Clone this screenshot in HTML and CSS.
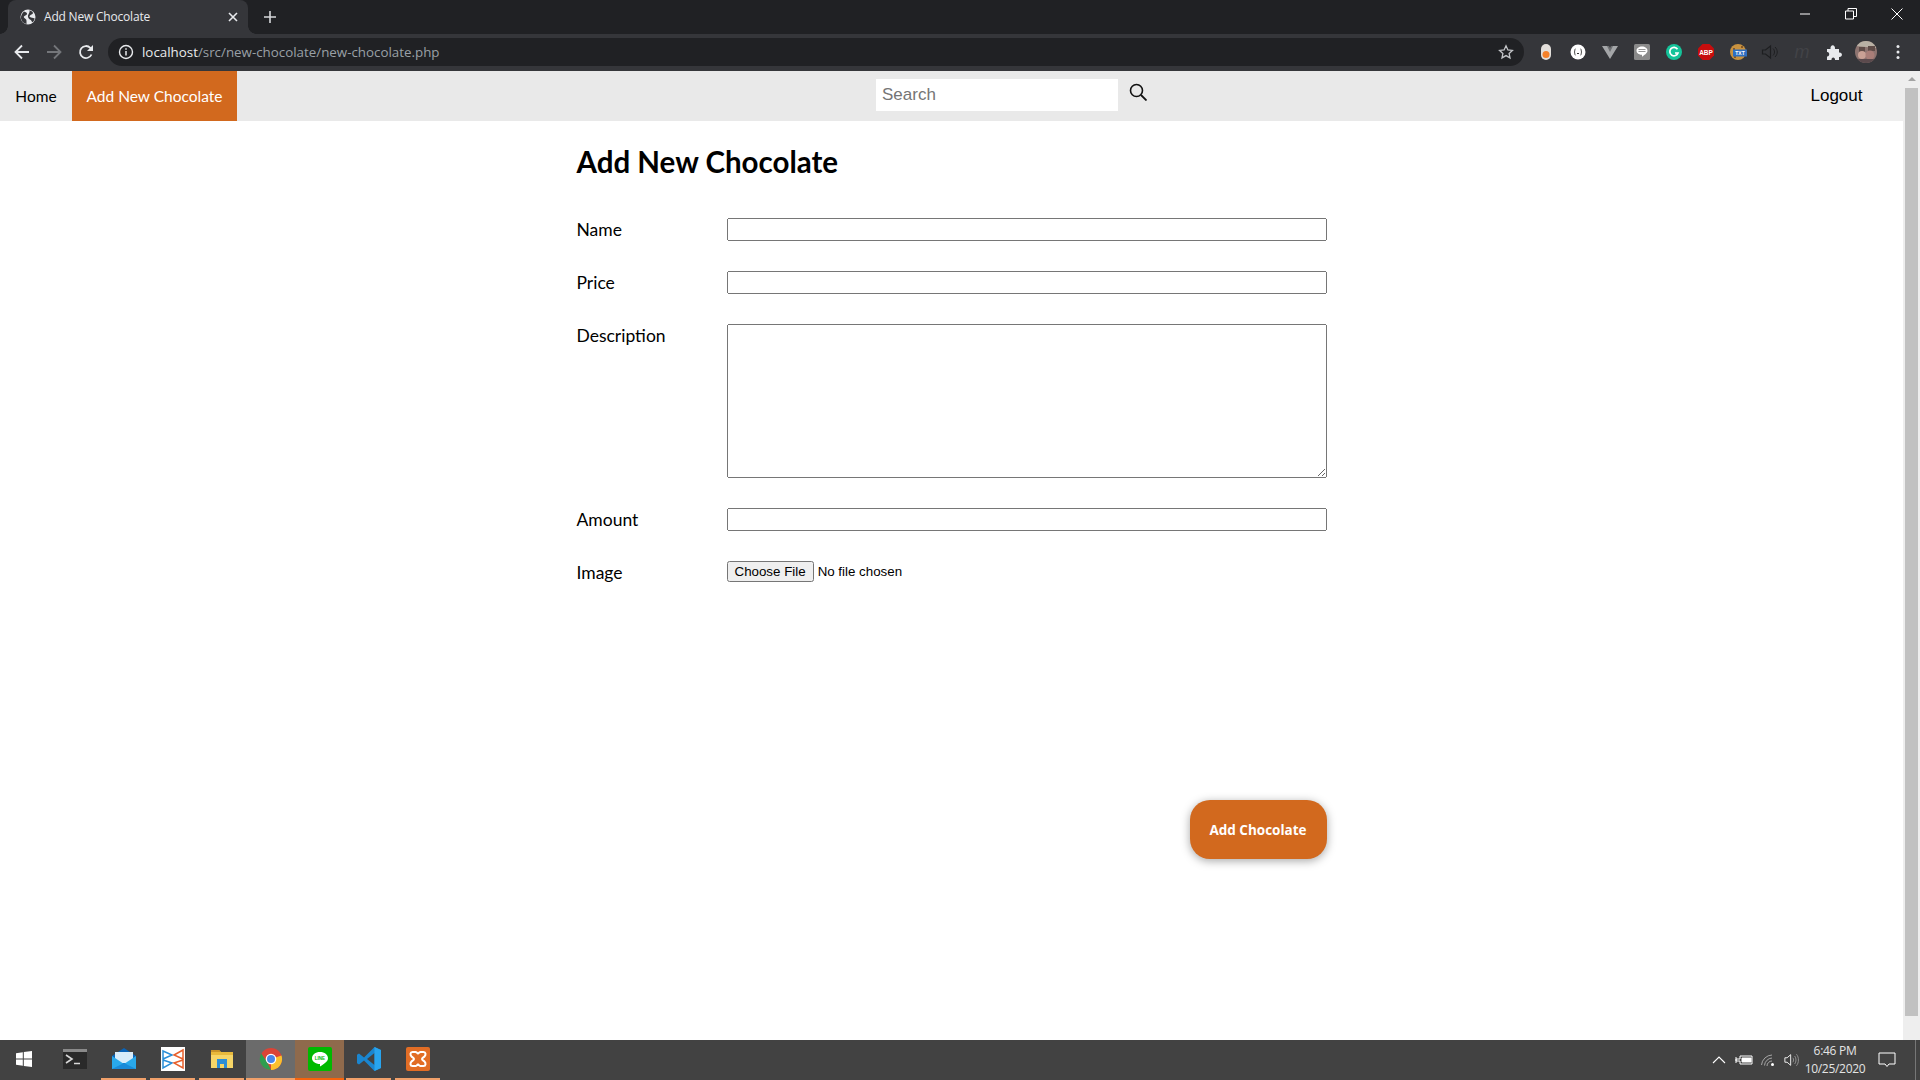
FILE: index.html
```html
<!DOCTYPE html>
<html lang="en">
  <head>
    <meta charset="UTF-8" />
    <title>Add New Chocolate</title>
    <link rel="stylesheet" href="styles.css">
  </head>

  <body>
    <div class="browser">
      <div class="tabstrip">
        <div class="tab">
          <svg class="favicon" viewBox="0 0 16 16"><circle cx="8" cy="8" r="7.500" fill="#e8eaed"/><path d="M4 2.500C5.500 3 6.500 3.500 7 4.500S5.500 6.500 4.500 7 3.500 8.500 5 9.500 6.500 11 6.500 12.500 6.500 14 6.500 15C3.500 14.500 1.500 12.500 1 9.500.7 7 2 4 4 2.500zM9.500 1.200c1.500.5 3 1.500 3.500 2.500S11 5.500 10 6.500 9.500 8 11 8.500 14 9 14.700 9.500C14.500 11 13.500 12.500 12 13.500 12 12 11 11 10 10.500S7.500 8 8 6.500 10 3 9.500 1.200z" fill="#35363a"/></svg>
          <span class="tab-title">Add New Chocolate</span>
          <svg class="tab-close" viewBox="0 0 10 10"><path d="M1 1l8 8M9 1l-8 8" stroke="#e8eaed" stroke-width="1.600"/></svg>
        </div>
        <svg class="new-tab" viewBox="0 0 12 12"><path d="M6 0v12M0 6h12" stroke="#d5d7da" stroke-width="1.600"/></svg>
        <div class="window-btns">
          <svg viewBox="0 0 12 12"><path d="M1 6h10" stroke="#fff"/></svg>
          <svg viewBox="0 0 12 12"><path d="M.5 3h8v8h-8zM3 3V.5h8.500v8H8.500" fill="none" stroke="#fff"/></svg>
          <svg viewBox="0 0 12 12"><path d="M.5.5l11 11M11.500.5l-11 11" stroke="#fff"/></svg>
        </div>
      </div>

      <div class="toolbar">
        <div class="nav-btn"><svg viewBox="0 0 16 16"><path d="M15 8H2M8 1.500L1.500 8 8 14.500" fill="none" stroke="#e8eaed" stroke-width="1.800"/></svg></div>
        <div class="nav-btn"><svg viewBox="0 0 16 16"><path d="M1 8h13M8 1.500L14.500 8 8 14.500" fill="none" stroke="#74767a" stroke-width="1.800"/></svg></div>
        <div class="nav-btn"><svg viewBox="0 0 16 16"><path d="M13.500 10.500A6 6 0 1 1 12.300 3.800L14 5.500" fill="none" stroke="#e8eaed" stroke-width="1.800"/><path d="M15 1v6H9z" fill="#e8eaed"/></svg></div>
        <div class="omnibox">
          <svg class="info" viewBox="0 0 16 16"><circle cx="8" cy="8" r="6.500" fill="none" stroke="#e8eaed" stroke-width="1.400"/><path d="M8 7v4.500M8 4.200v1.600" stroke="#e8eaed" stroke-width="1.500"/></svg>
          <span class="url"><b>localhost</b>/src/new-chocolate/new-chocolate.php</span>
          <svg class="star" viewBox="0 0 16 16"><path d="M8 1.800l1.900 4.100 4.500.5-3.300 3 .9 4.500L8 11.600l-4 2.300.9-4.500-3.300-3 4.500-.5z" fill="none" stroke="#c4c6c9" stroke-width="1.300"/></svg>
        </div>
        <div class="extensions">
          <svg viewBox="0 0 18 18"><rect x="4" y="1" width="10" height="16" rx="5" fill="#e3dfdb"/><circle cx="9" cy="11.500" r="3.500" fill="#f5812a"/></svg>
          <svg viewBox="0 0 18 18"><circle cx="9" cy="9" r="7.500" fill="#fff"/><path d="M6.500 6C5 6 6.500 9 5 9c1.500 0 0 3 1.500 3M11.500 6c1.500 0 0 3 1.500 3-1.500 0 0 3-1.500 3M8 10.500h2" fill="none" stroke="#333" stroke-width="1"/></svg>
          <svg viewBox="0 0 18 18"><path d="M1 3h6l2 4 2-4h6L9 16z" fill="#a4a6a8"/><path d="M6 3h2l1 2 1-2h2L9 9z" fill="#6d6f72"/></svg>
          <svg viewBox="0 0 18 18"><rect x="1" y="1" width="16" height="16" rx="1.500" fill="#8a8a8a"/><path d="M9 3.500c3 0 5.500 1.800 5.500 4.200 0 2.500-3.500 4.500-5.500 6v-2c-3 0-5.500-1.600-5.500-4 0-2.400 2.500-4.200 5.500-4.200z" fill="#fff"/><path d="M5.500 6.500h7M5.500 8.500h7" stroke="#999" stroke-width="1"/></svg>
          <svg viewBox="0 0 18 18"><circle cx="9" cy="9" r="8" fill="#15c39a"/><path d="M12.500 6.200A4.200 4.200 0 1 0 13 10H10" fill="none" stroke="#fff" stroke-width="1.700"/></svg>
          <svg viewBox="0 0 18 18"><path d="M5.500 1h7L17 5.500v7L12.500 17h-7L1 12.500v-7z" fill="#c70d0d"/><text x="9" y="11.700" class="abp-label">ABP</text></svg>
          <svg viewBox="0 0 18 18"><circle cx="9" cy="9" r="8" fill="#c9923f"/><circle cx="5" cy="6" r="1" fill="#6d4520"/><circle cx="6" cy="14" r="1" fill="#6d4520"/><circle cx="13" cy="4" r="1" fill="#6d4520"/><rect x="4" y="6.500" width="14" height="7" fill="#2f6fc0"/><text x="11" y="12.200" class="txt-label">TXT</text></svg>
          <svg viewBox="0 0 18 18"><path d="M1.500 7v4h3l5 4V3l-5 4z" fill="none" stroke="#1d1e20" stroke-width="1.200"/><path d="M12 5.500c2 2 2 5 0 7M14 4c3 3 3 7 0 10" fill="none" stroke="#1d1e20" stroke-width="1"/></svg>
          <span class="ext-m">m</span>
          <svg viewBox="0 0 18 18"><path d="M2 6h3.500c-.5-5 5-5 4.500 0H14v3.500c4-.5 4 5 0 4.500v3H10c.5-3.500-4-3.500-3.500 0H2v-3.500c3 .5 3-5 0-4.500z" fill="#e8eaed"/></svg>
          <svg class="avatar" viewBox="0 0 22 22"><defs><clipPath id="av"><circle cx="11" cy="11" r="11"/></clipPath></defs><g clip-path="url(#av)"><rect width="22" height="22" fill="#8d7470"/><path d="M0 0h22v7L0 5z" fill="#b9b1a5"/><path d="M4 6h6v6H4zM13 5h7v5h-7z" fill="#5f4c48"/><circle cx="7" cy="14" r="4" fill="#c9a195"/><circle cx="15" cy="14" r="4.500" fill="#a97e78"/><path d="M0 18h22v4H0z" fill="#5b4a4d"/></g></svg>
          <svg class="dots" viewBox="0 0 4 16"><circle cx="2" cy="2.500" r="1.500" fill="#e8eaed"/><circle cx="2" cy="8" r="1.500" fill="#e8eaed"/><circle cx="2" cy="13.500" r="1.500" fill="#e8eaed"/></svg>
        </div>
      </div>
    </div>

    <div class="viewport">
      <div class="page">
        <nav class="topnav">
          <a class="topnav-link" href="#">Home</a>
          <a class="topnav-link active" href="#">Add New Chocolate</a>
          <form class="search">
            <input class="search-input" type="text" placeholder="Search">
            <svg class="search-icon" viewBox="0 0 18 18"><circle cx="7.500" cy="7.500" r="6" fill="none" stroke="#111" stroke-width="1.600"/><path d="M12 12l5.500 5.500" stroke="#111" stroke-width="1.800"/></svg>
          </form>
          <a class="logout" href="#">Logout</a>
        </nav>

        <main class="container">
          <h1 class="title">Add New Chocolate</h1>
          <form class="chocolate-form">
            <label class="field-label">Name</label>
            <input class="field-input" type="text">
            <label class="field-label">Price</label>
            <input class="field-input" type="text">
            <label class="field-label">Description</label>
            <textarea class="field-area"></textarea>
            <label class="field-label">Amount</label>
            <input class="field-input" type="text">
            <label class="field-label">Image</label>
            <input class="field-file" type="file">
          </form>
          <div class="actions">
            <button class="submit" type="button">Add Chocolate</button>
          </div>
        </main>
      </div>

      <div class="scrollbar">
        <span class="arrow-up"></span>
        <div class="thumb"></div>
      </div>
    </div>

    <div class="taskbar">
      <div class="task start">
        <svg viewBox="0 0 18 18"><path d="M1 3.200l6.800-1V8.500H1zM8.800 2L17 .9V8.500H8.800zM1 9.500h6.800v6.300l-6.800-1zM8.800 9.500H17v7.600l-8.200-1.100z" fill="#fff"/></svg>
      </div>
      <div class="task">
        <svg class="big" viewBox="0 0 24 20"><rect width="24" height="20" fill="#2a2a2a"/><rect width="24" height="3" fill="#8a8a8a"/><path d="M3 6l6 4-6 4" fill="none" stroke="#d8d8d8" stroke-width="1.600"/><path d="M11 14.500h6" stroke="#d8d8d8" stroke-width="1.500"/></svg>
      </div>
      <div class="task open">
        <svg class="big" viewBox="0 0 24 24"><path d="M0 9L12 1l12 8v13H0z" fill="#0a64b8"/><path d="M3 5h18v11H3z" fill="#d8ecfa"/><path d="M0 9l12 8 12-8v13H0z" fill="#29a8ea"/><path d="M0 22l12-6 12 6z" fill="#1a8ad8"/></svg>
      </div>
      <div class="task open">
        <svg class="big" viewBox="0 0 24 24"><rect width="24" height="24" fill="#fff"/><path d="M2 4l9 4-9 4zM2 13l9 3-9 5z" fill="none" stroke="#2a8fd8" stroke-width="1.500"/><path d="M22 3l-9 5 9 4zM22 13l-9 3 9 5z" fill="none" stroke="#e8602c" stroke-width="1.500"/></svg>
      </div>
      <div class="task open">
        <svg class="big" viewBox="0 0 24 24"><path d="M1 3h8l2 2h12v16H1z" fill="#e8b93c"/><path d="M1 3h8l2 2H1z" fill="#c8932a"/><path d="M1 8h22v13H1z" fill="#f6d567"/><path d="M7 12h10v9h-3v-4h-4v4H7z" fill="#2d8ed6"/></svg>
      </div>
      <div class="task open current">
        <svg class="big" viewBox="0 0 24 24"><circle cx="12" cy="12" r="11" fill="#db4437"/><path d="M12 12L22.500 8.500A11 11 0 0 1 12 23z" fill="#fbc02d"/><path d="M12 23A11 11 0 0 1 2.300 6.500L8 15z" fill="#2e9e4f"/><circle cx="12" cy="12" r="5.300" fill="#fff"/><circle cx="12" cy="12" r="4" fill="#4a86e8"/></svg>
      </div>
      <div class="task open active">
        <svg class="big" viewBox="0 0 24 24"><rect width="24" height="24" rx="2" fill="#00b900"/><path d="M12 5c4.500 0 8 2.700 8 6.200 0 3.300-4.500 6.200-8 8.300v-2.500c-4.500 0-8-2.600-8-5.800C4 7.700 7.500 5 12 5z" fill="#fff"/><text x="12" y="13" class="line-label">LINE</text></svg>
      </div>
      <div class="task open">
        <svg class="big" viewBox="0 0 24 24"><path d="M17.500 0L24 3v18l-6.500 3L7 13.500 2 17.500 0 16.200V7.800L2 6.500 7 10.500z" fill="#1a86d0"/><path d="M17.500 6L10 12l7.500 6z" fill="#424242"/><path d="M17.500 0L24 3v18l-6.500 3z" fill="#28a4ee"/></svg>
      </div>
      <div class="task open">
        <svg class="big" viewBox="0 0 24 24"><rect width="24" height="24" rx="2" fill="#e26d25"/><path d="M6.500 5h3c1 0 1.500 1 2.500 1.500C13 6 13.500 5 14.500 5h3C20 5 20 8 18.500 9.500 17.500 10.500 16 11 16 12s1.500 1.500 2.500 2.500C20 16 20 19 17.500 19h-3c-1 0-1.500-1-2.500-1.500-1 .5-1.500 1.500-2.500 1.500h-3C4 19 4 16 5.500 14.500 6.500 13.500 8 13 8 12S6.500 10.500 5.500 9.500C4 8 4 5 6.500 5z" fill="none" stroke="#fff" stroke-width="2"/></svg>
      </div>

      <div class="tray">
        <svg class="tray-icon chevron" viewBox="0 0 16 16"><path d="M2 11l6-6 6 6" fill="none" stroke="#fff" stroke-width="1.100"/></svg>
        <svg class="tray-icon wide" viewBox="0 0 18 14"><path d="M5 3h12v8H5V8H1V6h4z" fill="none" stroke="#fff"/><path d="M7 5h9v4H7zM1 4v6" fill="#fff" stroke="#fff"/></svg>
        <svg class="tray-icon dim" viewBox="0 0 16 16"><path d="M1.500 13A11 11 0 0 1 12 3M4.500 13.500A8 8 0 0 1 12 6M7 14a5 5 0 0 1 5-5" fill="none" stroke="#a6a6a6"/><circle cx="12.500" cy="12.500" r="1.500" fill="#fff"/></svg>
        <svg class="tray-icon volume" viewBox="0 0 18 16"><path d="M1 5.500v5h2.500L7.500 14V2L3.500 5.500z" fill="none" stroke="#fff"/><path d="M10 5.500c1 1.500 1 3.500 0 5M12 3.500c2 2.500 2 6.500 0 9M14 1.500c3 3.500 3 9.500 0 13" fill="none" stroke="#9a9a9a"/></svg>
        <div class="clock">
          <span>6:46 PM</span>
          <span>10/25/2020</span>
        </div>
        <svg class="tray-icon notify" viewBox="0 0 18 16"><path d="M1 1h16v11h-6l-2 2.500L7 12H1z" fill="none" stroke="#fff"/></svg>
        <span class="show-desktop"></span>
      </div>
    </div>
  </body>
</html>
```

FILE: styles.css
```css
* {
  box-sizing: border-box;
}

html,
body {
  margin: 0;
  padding: 0;
  height: 1080px;
  overflow: hidden;
}

body {
  display: flex;
  flex-direction: column;
  background: #fff;
  font-family: Lato, sans-serif;
}

a {
  text-decoration: none;
}

/* browser chrome */
.browser {
  flex: none;
}

.tabstrip {
  display: flex;
  align-items: center;
  height: 34px;
  padding-left: 8px;
  background: #202124;
}

.tab {
  position: relative;
  display: flex;
  align-items: center;
  width: 240px;
  height: 34px;
  padding: 0 10px 1px 12px;
  background: #35363a;
  border-radius: 8px 8px 0 0;
}

.tab::before,
.tab::after {
  content: "";
  position: absolute;
  bottom: 0;
  width: 8px;
  height: 8px;
}

.tab::before {
  left: -8px;
  background: radial-gradient(circle at 0 0, #202124 7.500px, #35363a 8px);
}

.tab::after {
  right: -8px;
  background: radial-gradient(circle at 100% 0, #202124 7.500px, #35363a 8px);
}

.favicon {
  width: 16px;
  height: 16px;
  flex: none;
}

.tab-title {
  flex: 1;
  margin-left: 8px;
  color: #e8eaed;
  font: 12px "Open Sans", sans-serif;
  letter-spacing: -0.2px;
}

.tab-close {
  width: 10px;
  height: 10px;
}

.new-tab {
  width: 12px;
  height: 12px;
  margin-left: 16px;
}

.window-btns {
  display: flex;
  gap: 34px;
  margin-left: auto;
  margin-top: -6px;
  padding-right: 17px;
}

.window-btns svg {
  width: 12px;
  height: 12px;
}

.toolbar {
  display: flex;
  align-items: center;
  height: 37px;
  padding: 0 0 1px 6px;
  background: #35363a;
}

.nav-btn {
  display: flex;
  align-items: center;
  justify-content: center;
  width: 32px;
  height: 28px;
}

.nav-btn svg {
  width: 16px;
  height: 16px;
}

.omnibox {
  display: flex;
  align-items: center;
  width: 1416px;
  height: 28px;
  margin-left: 6px;
  padding: 0 10px;
  background: #202124;
  border-radius: 14px;
}

.info {
  width: 16px;
  height: 16px;
}

.url {
  flex: 1;
  margin: -1px 0 0 8px;
  color: #9aa0a6;
  font: 13.350px "Open Sans", sans-serif;
}

.url b {
  color: #e8eaed;
  font-weight: 400;
}

.star {
  width: 16px;
  height: 16px;
}

.extensions {
  display: flex;
  align-items: center;
  gap: 14px;
  margin-left: 13px;
}

.extensions svg {
  width: 18px;
  height: 18px;
  flex: none;
}

.extensions .avatar {
  width: 22px;
  height: 22px;
  margin: 0 -2px;
}

.extensions .dots {
  width: 4px;
  height: 16px;
  margin-left: 7px;
}

.abp-label {
  fill: #fff;
  font: 700 6.500px "Liberation Sans", sans-serif;
  text-anchor: middle;
}

.txt-label {
  fill: #fff;
  font: 700 5px "Liberation Sans", sans-serif;
  text-anchor: middle;
}

.line-label {
  fill: #00b900;
  font: 700 4.500px "Liberation Sans", sans-serif;
  text-anchor: middle;
}

.ext-m {
  width: 18px;
  color: #424347;
  font: italic 18px/18px "Liberation Sans", sans-serif;
  text-align: center;
}

/* page */
.viewport {
  display: flex;
  flex: 1;
  min-height: 0;
}

.page {
  flex: 1;
  min-width: 0;
}

.scrollbar {
  display: flex;
  flex-direction: column;
  align-items: center;
  width: 17px;
  padding-top: 6px;
  background: #eee;
}

.arrow-up {
  width: 0;
  height: 0;
  margin-bottom: 7px;
  border-left: 4px solid transparent;
  border-right: 4px solid transparent;
  border-bottom: 4px solid #a3a3a3;
}

.thumb {
  width: 13px;
  height: 928px;
  background: #c1c1c1;
}

.topnav {
  display: flex;
  align-items: stretch;
  height: 50px;
  background: #e9e9e9;
}

.topnav-link {
  display: flex;
  align-items: center;
  justify-content: center;
  width: 72px;
  color: #000;
  font-size: 15.500px;
}

.topnav-link.active {
  width: 165px;
  background: #d2691e;
  color: #fff;
}

.search {
  display: flex;
  margin-left: 639px;
}

.search-input {
  width: 242px;
  height: 32px;
  margin-top: 8px;
  padding: 0 6px;
  background: #fff;
  border: 0;
  outline: 0;
  font: 17px "Liberation Sans", sans-serif;
}

.search-input::placeholder {
  color: #757575;
}

.search-icon {
  width: 18px;
  height: 18px;
  margin: 12px 0 0 11px;
}

.logout {
  display: flex;
  align-items: center;
  justify-content: center;
  width: 133px;
  margin-left: auto;
  padding-bottom: 1px;
  background: #eee;
  color: #000;
  font: 17px "Liberation Sans", sans-serif;
}

.container {
  width: 750px;
  margin: 0 auto;
}

.title {
  margin: 0;
  padding-top: 20px;
  font-size: 29.500px;
  line-height: 42px;
  font-weight: 700;
  color: #000;
}

.chocolate-form {
  display: grid;
  grid-template-columns: 150px 600px;
  margin-top: 35px;
}

.field-label {
  margin-bottom: 29px;
  color: #000;
  font-size: 17.500px;
  line-height: 24px;
}

.field-input {
  display: block;
  width: 600px;
  height: 23px;
  margin: 0 0 30px;
}

.field-area {
  display: block;
  width: 600px;
  height: 154px;
  margin: 0 0 30px;
}

.field-file {
  width: 300px;
  height: 21px;
  font: 13.333px "Liberation Sans", sans-serif;
}

.actions {
  display: flex;
  justify-content: flex-end;
  margin-top: 186px;
}

.submit {
  width: 137px;
  height: 59px;
  padding: 0;
  background: #d2691e;
  border: 0;
  border-radius: 20px;
  box-shadow: 0 2px 10px rgba(0, 0, 0, 0.35);
  color: #fff;
  font: 700 13.500px "Open Sans", sans-serif;
}

/* windows taskbar */
.taskbar {
  display: flex;
  flex: none;
  height: 40px;
  padding-left: 1px;
  background: #424242;
}

.task {
  display: flex;
  align-items: center;
  justify-content: center;
  width: 49px;
  height: 40px;
  border-bottom: 2px solid transparent;
}

.task svg {
  width: 18px;
  height: 18px;
}

.task .big {
  width: 24px;
  height: 24px;
}

.task.start {
  padding-right: 3px;
}

.task.open {
  border-image: linear-gradient(90deg, transparent 4px, #f0a06a 4px, #f0a06a 45px, transparent 45px) 2;
}

.task.current {
  background: #6b6b6b;
  border-image: none;
  border-bottom-color: #f0a06a;
}

.task.active {
  background: #8f6a4c;
  border-image: none;
  border-bottom-color: #f7630c;
}

.tray {
  display: flex;
  align-items: center;
  margin-left: auto;
  height: 40px;
}

.tray-icon {
  width: 16px;
  height: 16px;
  margin-right: 8px;
}

.tray-icon.wide {
  width: 18px;
  margin-right: 6px;
}

.tray-icon.dim {
  margin-left: 1px;
}

.tray-icon.volume {
  margin-right: 4px;
}

.clock {
  display: flex;
  flex-direction: column;
  align-items: center;
  width: 62px;
  margin-right: 12px;
  color: #e4e4e4;
  font: 12px/18px "Open Sans", sans-serif;
  letter-spacing: -0.3px;
}

.tray-icon.notify {
  width: 18px;
  height: 18px;
  margin-right: 19px;
}

.show-desktop {
  width: 1px;
  height: 40px;
  margin-right: 4px;
  background: #777;
}
```
